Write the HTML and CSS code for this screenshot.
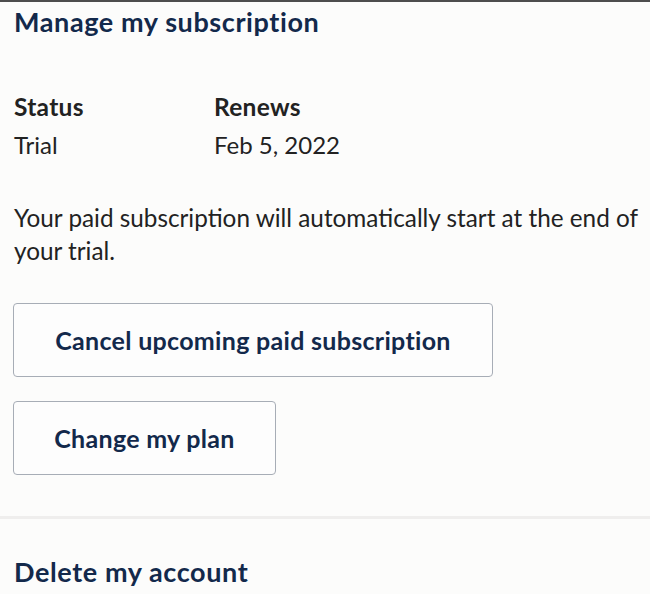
FILE: index.html
```html
<!DOCTYPE html>
<html>
<head>
<meta charset="utf-8">
<link rel="stylesheet" href="styles.css">
</head>
<body>
<main class="page">
  <section class="section">
    <h1 class="title">Manage my subscription</h1>
    <div class="info">
      <div class="info-col">
        <div class="info-label">Status</div>
        <div class="info-value">Trial</div>
      </div>
      <div class="info-col">
        <div class="info-label">Renews</div>
        <div class="info-value">Feb 5, 2022</div>
      </div>
    </div>
    <p class="note">Your paid subscription will automatically start at the end of your trial.</p>
    <div class="actions">
      <button class="btn btn-wide">Cancel upcoming paid subscription</button>
      <button class="btn btn-narrow">Change my plan</button>
    </div>
  </section>
  <hr class="divider">
  <section class="section section-delete">
    <h2 class="title">Delete my account</h2>
  </section>
</main>
</body>
</html>
```
FILE: styles.css
```css
html, body {
  margin: 0;
  padding: 0;
  background: #fcfcfb;
}
body {
  font-family: Lato, "Source Sans Pro", sans-serif;
  color: #222222;
  border-top: 2px solid #4d4d4d;
  height: 592px;
  overflow: hidden;
}
.section {
  padding: 0 4px 0 14px;
}
.title {
  margin: 0;
  padding-top: 4px;
  font-size: 27px;
  letter-spacing: 0.6px;
  line-height: 32px;
  font-weight: 700;
  color: #13294b;
}
.info {
  display: flex;
  margin-top: 50px;
}
.info-col {
  width: 200px;
}
.info-label {
  font-weight: 700;
  font-size: 24.5px;
  letter-spacing: 0.3px;
  line-height: 38px;
}
.info-value {
  font-size: 24px;
  line-height: 38px;
}
.note {
  margin: 37px 0 0 0;
  font-size: 24.3px;
  line-height: 33px;
}
.actions {
  display: flex;
  flex-direction: column;
  align-items: flex-start;
  gap: 24px;
  margin-top: 36px;
}
.btn {
  font-family: inherit;
  font-size: 25px;
  letter-spacing: 0.3px;
  font-weight: 700;
  color: #13294b;
  background: #fdfdfd;
  border: 1px solid #a7adb6;
  border-radius: 4px;
  height: 74px;
  padding: 0 20px;
  margin-left: -1px;
}
.btn-wide { width: 480px; }
.btn-narrow { width: 263px; }
.divider {
  margin: 41px 0 0 0;
  border: 0;
  height: 3px;
  background: #efeeed;
}
.section-delete .title {
  padding-top: 37px;
}
```
